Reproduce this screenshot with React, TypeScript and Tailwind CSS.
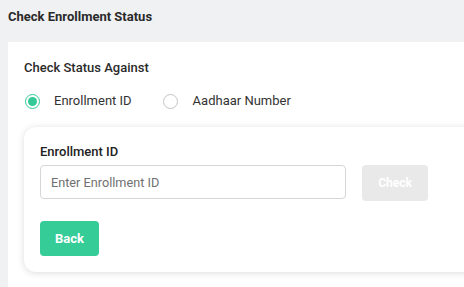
export default function App() {
  return (
    <div className="w-[464px] h-[287px] overflow-hidden bg-[#f0f1f3] font-['Roboto',sans-serif] text-[#222]">
      <div className="h-[42px] pl-2 pt-[10px]">
        <h1 className="text-[13px] leading-[14px] font-bold text-[#2a2a2a]">Check Enrollment Status</h1>
      </div>
      <div className="ml-2 w-[500px] h-[260px] bg-white pl-4 pt-[19px]">
        <div className="text-[13px] leading-[14px] font-medium text-[#2a2a2a]">Check Status Against</div>
        <div className="mt-[18px] flex items-center h-[16px]">
          <label className="flex items-center">
            <span className="ml-[1px] w-[15px] h-[15px] rounded-full border-[1.5px] border-[#34c996] flex items-center justify-center">
              <span className="w-[9px] h-[9px] rounded-full bg-[#34c996]" />
            </span>
            <span className="ml-[14px] text-[13px] text-[#333]">Enrollment ID</span>
          </label>
          <label className="flex items-center ml-[31px]">
            <span className="w-[15px] h-[15px] rounded-full border border-[#c4c4c4]" />
            <span className="ml-[15px] text-[13px] text-[#333]">Aadhaar Number</span>
          </label>
        </div>
        <div className="mt-[18px] w-[470px] rounded-[12px] bg-white shadow-[0_1px_7px_rgba(0,0,0,0.14)] pl-4 pt-[18px] pb-[16px]">
          <div className="text-[13px] leading-[14px] font-medium text-[#222]">Enrollment ID</div>
          <div className="mt-[6px] flex items-start">
            <input
              className="w-[306px] h-[34px] rounded-[4px] border border-[#d6d6d6] px-[10px] text-[12.7px] placeholder:text-[#707070] outline-none"
              placeholder="Enter Enrollment ID"
            />
            <button className="ml-4 w-[66px] h-[36px] rounded-[4px] bg-[#e9e9e9] text-white text-[12px] font-bold">Check</button>
          </div>
          <button className="mt-[20px] w-[59px] h-[35px] rounded-[4px] bg-[#35cc98] text-white text-[13px] font-bold">Back</button>
        </div>
      </div>
    </div>
  );
}
